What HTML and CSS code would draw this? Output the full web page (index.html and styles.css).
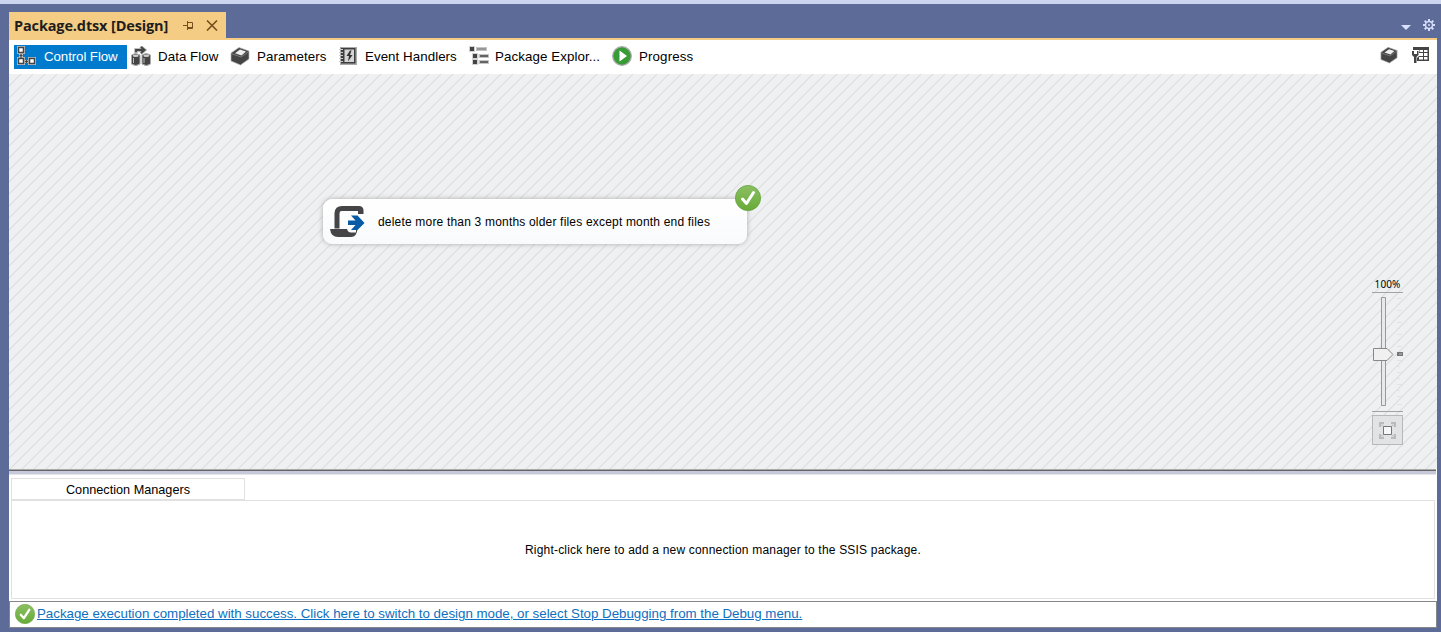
FILE: index.html
```html
<!DOCTYPE html>
<html lang="en">
<head>
<meta charset="utf-8">
<title>Package.dtsx [Design]</title>
<link rel="stylesheet" href="styles.css">
</head>
<body>
<svg class="defs" width="0" height="0">
  <defs>
    <linearGradient id="green" x1="0" y1="0" x2="0" y2="1"><stop offset="0" stop-color="#8cbf62"/><stop offset="1" stop-color="#67ab38"/></linearGradient>
    <symbol id="success" viewBox="0 0 26 26">
      <circle cx="13" cy="13" r="12.6" fill="url(#green)" stroke="#67a33f" stroke-width=".8"/>
      <path d="M7.500 14l4 4.500L18.500 7.500" fill="none" stroke="#fff" stroke-width="3" stroke-linecap="round" stroke-linejoin="round"/>
    </symbol>
    <symbol id="box" viewBox="0 0 20 20">
      <path d="M1 7L9 1.500l10 3.500v8l-8.500 6L1 15z" fill="#444" stroke="#b5b5b5" stroke-width=".7"/>
      <path d="M5 7.300L10 3.500l6 2-4.500 4z" fill="#eee"/>
      <path d="M1 7.500l10 3.500 8-5.500" fill="none" stroke="#888" stroke-width=".8"/>
    </symbol>
  </defs>
</svg>
<div class="window">
  <header class="titlebar">
    <div class="doc-tab">
      <span class="doc-name">Package.dtsx [Design]</span>
      <svg class="pin" width="11" height="9" viewBox="0 0 11 9" fill="none" stroke="#75501f"><path d="M0 4.500h4M4.500 0v9M4.500 1.500h5v6M4.500 6.500h5M4.500 7.500h5"/></svg>
      <svg class="close" width="12" height="11" viewBox="0 0 12 11"><path d="M1 .5l10 10M11 .5l-10 10" stroke="#75501f" stroke-width="1.600"/></svg>
    </div>
    <div class="title-tools">
      <svg width="10" height="5" viewBox="0 0 10 5"><path d="M0 0h10L5 5z" fill="#d9e1ff"/></svg>
      <svg class="gear" width="12" height="12" viewBox="0 0 12 12" fill="none" stroke="#d5ddfa"><circle cx="6" cy="6" r="3.500" stroke-width="1.500"/><circle cx="6" cy="6" r="1" fill="#d5ddfa" stroke="none"/><path d="M6 0v2M6 10v2M0 6h2M10 6h2M1.700 1.700l1.500 1.500M8.800 8.800l1.500 1.500M10.300 1.700L8.800 3.200M3.200 8.800l-1.500 1.500" stroke-width="2"/></svg>
    </div>
  </header>
  <nav class="tabs">
    <a class="tab tab-flow active"><svg width="20" height="20" viewBox="0 0 20 20"><path d="M1 0h8v8H7v3h2v3h3v-3h8v8h-8v-2H9v2H1v-8h2V8H1z" fill="#c4c4c4"/><g fill="#fff" stroke="#444" stroke-width="1.500"><path d="M2.500 1.500h5v5h-5zM2.500 12.500h5v5h-5zM13.500 12.500h5v5h-5z"/></g><path d="M5 8v4M3.500 9.500h3M9 15.500h3M10.500 14v3" stroke="#444" stroke-width="1.200"/></svg><span>Control Flow</span></a>
    <a class="tab tab-data"><svg width="20" height="20" viewBox="0 0 20 20"><path d="M.5 9q4-3 8.500 0v9q-4 3-8.500 0zM11 9q4-3 8.500 0v9q-4 3-8.500 0z" fill="#444" stroke="#aaa"/><ellipse cx="4.700" cy="9.700" rx="3" ry="1.300" fill="#ccc"/><ellipse cx="15.300" cy="9.700" rx="3" ry="1.300" fill="#ccc"/><path d="M2.500 12v5M13 12v5" stroke="#bbb"/><path d="M5 7V4h8M9.500.7L13.500 4 9.500 7.300" fill="none" stroke="#aaa" stroke-width="3.500"/><path d="M5 6V4h8M10 1l3.500 3L10 7" fill="none" stroke="#444" stroke-width="1.800"/></svg><span>Data Flow</span></a>
    <a class="tab tab-param"><svg width="20" height="20"><use href="#box"/></svg><span>Parameters</span></a>
    <a class="tab tab-event"><svg width="18" height="20" viewBox="0 0 18 20"><path d="M1 1h17v18H1z" fill="#aaa"/><path d="M2 2h14.500v15.500H2z" fill="#3e3e3e"/><path d="M5.500 3.500h9.500v12.500H5.500z" fill="#d5d5d5"/><path d="M11 4.500L7.500 10H10l-1 5.500L13.500 9H11l1.500-4.500z" fill="#333"/><path d="M0 3.500h4M0 6.500h4M0 9.500h4M0 12.500h4M0 15.500h4" stroke="#ccc"/></svg><span>Event Handlers</span></a>
    <a class="tab tab-explorer"><svg width="20" height="20" viewBox="0 0 20 20"><path d="M0 0h6v6H0zM3 7h6v12H3z" fill="#d2d2d2"/><path d="M1 1h4v4H1zM4 8h4v4H4zM4 14h4v4H4z" fill="#444"/><path d="M7 1h11v4H7zM9.500 8H20v4H9.500zM9.500 14H20v4H9.500z" fill="#c4c4c4"/><path d="M8 3h9" stroke="#888" stroke-width="1.500"/><path d="M11 10h8M11 16h8" stroke="#444" stroke-width="1.600"/></svg><span>Package Explor...</span></a>
    <a class="tab tab-progress"><svg width="20" height="20" viewBox="0 0 20 20"><circle cx="10" cy="10" r="9.300" fill="#389b35" stroke="#aaa" stroke-width="1.300"/><path d="M7.500 4.500v11l7.500-5.500z" fill="#fff"/></svg><span>Progress</span></a>
    <div class="tab-tools">
      <svg width="20" height="18" viewBox="0 0 20 20"><use href="#box"/></svg>
      <svg width="18" height="18" viewBox="0 0 18 18"><path d="M2 1h16v14H6V7H2z" fill="#444"/><path d="M4 4h3v1H4zM8.500 4h3.500v2H8.500zM13 4h3.500v2H13zM8 7h4v3H8zM13 7h3.500v3H13zM8 11h4v2.500H8zM13 11h3.500v2.500H13z" fill="#fff"/><path d="M0 4h8v6l-2 2v6H2v-6l-2-2z" fill="#fff"/><path d="M1 5v4l2 2v6h2.500v-6l2-2V5H6v3H3V5z" fill="#444"/></svg>
    </div>
  </nav>
  <main class="canvas">
    <svg class="hatch" width="1428" height="395"><defs><pattern id="lines" width="12" height="12" patternUnits="userSpaceOnUse"><path d="M-2 14L14-2M-2 2L2-2M10 14l4-4" stroke="#dcdddf" stroke-width="1.100"/></pattern></defs><rect width="1428" height="395" fill="url(#lines)"/></svg>
    <div class="task">
      <svg class="script-icon" width="36" height="34" viewBox="0 0 36 34"><path d="M4.500 23.500V8Q5 1 12 1h17q4 0 4.500 4v4H28V6H11.500Q9.500 6 9.500 9v14.500z" fill="#454547"/><path d="M0 24h17q1 3.500 4 3.500h5v-4h1.500Q27 32 21 32H8q-7 0-8-8z" fill="#454547"/><path d="M18 15.500h7.500L21 10.500h6.500l7 7.500-7 7H21l4.500-5H18z" fill="#075aa6"/></svg>
      <span>delete more than 3 months older files except month end files</span>
      <svg class="badge" width="26" height="26"><use href="#success"/></svg>
    </div>
    <div class="zoom">
      <span class="zoom-value">100%</span>
      <svg width="31" height="120" viewBox="0 0 31 120"><path d="M0 .5h31M0 119.500h31" stroke="#a3a3a3"/><path d="M9.500 5.500h4v108h-4z" fill="#e8e9eb" stroke="#999"/><path d="M25 6.500h5M25 12.500h3M25 18.500h5M25 24.500h3M25 30.500h5M25 36.500h3M25 42.500h5M25 48.500h3M25 54.500h5M25 68.500h5M25 74.500h3M25 80.500h5M25 86.500h3M25 92.500h5M25 98.500h3M25 104.500h5M25 112.500h5" stroke="#e2e3e5"/><path d="M1.500 56.500H15l6 6-6 6H1.500z" fill="#f0f0f1" stroke="#888"/><path d="M25 60h6v4h-6z" fill="#777"/><path d="M27 62h3" stroke="#bbb"/></svg>
      <div class="fit"><svg width="17" height="17" viewBox="0 0 17 17"><path d="M1 5V1h4M12 1h4v4M16 12v4h-4M5 16H1v-4" fill="none" stroke="#bbb" stroke-width="2.500"/><path d="M3 3l3 3M14 3l-3 3M3 14l3-3M14 14l-3-3" stroke="#bbb"/><path d="M4.500 4.500h8v8h-8z" fill="#f7f7f7" stroke="#777"/></svg></div>
    </div>
  </main>
  <div class="splitter"></div>
  <section class="connections">
    <div class="conn-tab"><span>Connection Managers</span></div>
    <div class="conn-body"><span>Right-click here to add a new connection manager to the SSIS package.</span></div>
  </section>
  <footer class="status"><svg width="20" height="20"><use href="#success"/></svg><a>Package execution completed with success. Click here to switch to design mode, or select Stop Debugging from the Debug menu.</a></footer>
</div>
</body>
</html>
```
FILE: styles.css
```css
* { box-sizing: border-box; }
body { margin: 0; width: 1441px; height: 632px; overflow: hidden; font-family: "Liberation Sans", Arial, sans-serif; color: #000; }
svg { display: block; flex: none; }
.defs { position: absolute; }
span, a { white-space: nowrap; }
.window { height: 632px; background: #5d6b99; border-top: 4px solid #ccd5f0; padding: 0 4px 4px 9px; display: flex; flex-direction: column; }
.titlebar { height: 36px; flex: none; padding-top: 8px; display: flex; justify-content: space-between; border-bottom: 2px solid #f5cc84; }
.doc-tab { width: 217px; height: 27px; background: #f5cc84; display: flex; align-items: center; padding-left: 5px; }
.doc-name { width: 169px; font: 700 14.5px/24px "Open Sans", sans-serif; letter-spacing: -.14px; color: #1e1e1e; }
.pin { margin-right: 12px; }
.title-tools { display: flex; align-items: center; gap: 12px; padding: 5px 2px 0 0; }
.gear { margin-top: -5px; }
.tabs { height: 34px; flex: none; background: #fff; padding: 5px 8px 5px 5px; display: flex; }
.tab { height: 24px; padding-bottom: 2px; display: flex; align-items: center; gap: 8px; font-size: 13.33px; letter-spacing: .05px; }
.tab-flow { width: 113px; padding-left: 2px; letter-spacing: -.1px; }
.tab-data { width: 103px; padding-left: 4px; gap: 7px; }
.tab-param { width: 109px; gap: 7px; }
.tab-event { width: 130px; }
.tab-explorer { width: 143px; gap: 6px; letter-spacing: .08px; }
.tab-progress { gap: 7px; letter-spacing: .12px; }
.active { background: #007acc; color: #fff; }
.tab-tools { margin-left: auto; display: flex; gap: 12px; padding-top: 1px; }
.canvas { height: 395px; flex: none; position: relative; background: #eff0f2; }
.hatch { position: absolute; left: 0; top: 0; }
.task { position: absolute; left: 314px; top: 125px; width: 424px; height: 45px; border-radius: 9px; background: linear-gradient(#fff, #f9fafc); box-shadow: 0 0 5px #aaa; display: flex; align-items: center; padding-left: 7px; gap: 12px; font-size: 12px; letter-spacing: .188px; }
.script-icon { width: 36px; }
.badge { position: absolute; left: 412px; top: -14px; }
.zoom { position: absolute; left: 1363px; top: 204px; width: 31px; display: flex; flex-direction: column; align-items: center; }
.zoom-value { height: 14px; font: 10px/13px "Noto Sans", sans-serif; letter-spacing: .1px; }
.fit { margin-top: 3px; width: 31px; height: 30px; background: #e2e3e5; border: 1px solid #b8b8b8; display: flex; align-items: center; justify-content: center; }
.splitter { height: 6px; flex: none; margin-right: 1px; background: #c6c9d9; border-top: 1px solid #aaa; border-bottom: 1px solid #e6e6e6; box-shadow: inset 0 1px #666, 1px 0 #fff; }
.connections { height: 126px; flex: none; background: #fff; padding: 3px 2px 2px; display: flex; flex-direction: column; }
.conn-tab { width: 234px; height: 22px; flex: none; padding-top: 1px; border: 1px solid #e1e1e1; display: flex; align-items: center; justify-content: center; font-size: 12.7px; }
.conn-body { flex: 1; border: 1px solid #e1e1e1; display: flex; align-items: center; justify-content: center; font-size: 12px; letter-spacing: .19px; }
.status { height: 27px; flex: none; background: #fff; border: 1px solid #85858b; display: flex; align-items: center; padding: 0 0 2px 5px; gap: 2px; font-size: 13.33px; letter-spacing: -.018px; }
.status a { color: #0e70c0; text-decoration: underline; }
```
